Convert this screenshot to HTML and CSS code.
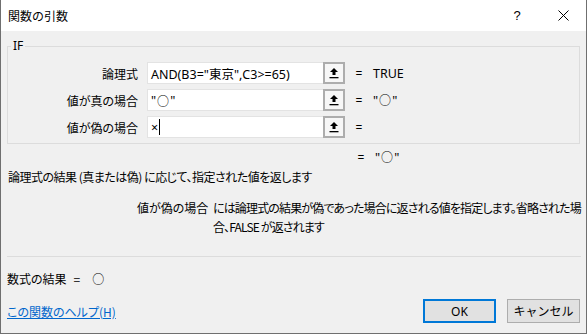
FILE: index.html
```html
<!DOCTYPE html>
<html lang="ja">
<head>
<meta charset="utf-8">
<title>関数の引数</title>
<link rel="stylesheet" href="styles.css">
</head>
<body>
<div class="window">
  <div class="titlebar">
    <span class="title">関数の引数</span>
    <div class="controls">
      <span class="ctl help">?</span>
      <span class="ctl close">
        <svg width="11" height="11" viewBox="0 0 11 11"><path d="M0.5 0.5 L10.5 10.5 M10.5 0.5 L0.5 10.5" stroke="#000" stroke-width="1" fill="none"/></svg>
      </span>
    </div>
  </div>
  <div class="content">
    <fieldset class="group">
      <legend class="legend">IF</legend>
      <div class="args">
        <div class="arg">
          <span class="arg-label">論理式</span>
          <span class="arg-input">AND(B3="東京",C3&gt;=65)</span>
          <span class="ref-btn"><svg width="10" height="12" viewBox="0 0 10 12"><path d="M5 1 L9 5 L6.5 5 L6.5 8 L3.5 8 L3.5 5 L1 5 Z" fill="#000"/><rect x="0.5" y="10" width="9" height="1.3" fill="#000"/></svg></span>
          <span class="arg-eq">=</span>
          <span class="arg-val">TRUE</span>
        </div>
        <div class="arg">
          <span class="arg-label">値が真の場合</span>
          <span class="arg-input">"<span class="circ">○</span>"</span>
          <span class="ref-btn"><svg width="10" height="12" viewBox="0 0 10 12"><path d="M5 1 L9 5 L6.5 5 L6.5 8 L3.5 8 L3.5 5 L1 5 Z" fill="#000"/><rect x="0.5" y="10" width="9" height="1.3" fill="#000"/></svg></span>
          <span class="arg-eq">=</span>
          <span class="arg-val">"<span class="circ">○</span>"</span>
        </div>
        <div class="arg">
          <span class="arg-label">値が偽の場合</span>
          <span class="arg-input">×<span class="caret"></span></span>
          <span class="ref-btn"><svg width="10" height="12" viewBox="0 0 10 12"><path d="M5 1 L9 5 L6.5 5 L6.5 8 L3.5 8 L3.5 5 L1 5 Z" fill="#000"/><rect x="0.5" y="10" width="9" height="1.3" fill="#000"/></svg></span>
          <span class="arg-eq">=</span>
          <span class="arg-val"></span>
        </div>
      </div>
    </fieldset>
    <div class="total">
      <span class="arg-eq">=</span>
      <span class="arg-val">"<span class="circ">○</span>"</span>
    </div>
    <p class="desc">論理式の結果 (真または偽) に応じて、指定された値を返します</p>
    <div class="argdesc">
      <span class="argdesc-name">値が偽の場合</span>
      <span class="argdesc-text">には論理式の結果が偽であった場合に返される値を指定します。省略された場合、FALSE が返されます</span>
    </div>
    <div class="sep"></div>
    <div class="result"><span>数式の結果</span><span class="res-eq">=</span><span class="circ res-val">○</span></div>
    <div class="footer">
      <a class="help-link" href="#">この関数のヘルプ(H)</a>
      <div class="buttons">
        <button class="btn btn-ok">OK</button>
        <button class="btn">キャンセル</button>
      </div>
    </div>
  </div>
</div>
</body>
</html>
```
FILE: styles.css
```css
html, body {
  margin: 0;
  padding: 0;
  background: #f0f0f0;
}
.window {
  width: 587px;
  height: 334px;
  box-sizing: border-box;
  border: 1px solid #6f6f6f;
  border-top: none;
  background: #f0f0f0;
  display: flex;
  flex-direction: column;
  font-family: "Noto Sans", "Noto Sans CJK JP", sans-serif;
  font-size: 12px;
  color: #000;
  overflow: hidden;
}
.title, .arg-label, .desc, .argdesc, .result, .help-link {
  font-family: "Noto Sans CJK JP", sans-serif;
  font-feature-settings: "palt" 1;
}
.titlebar {
  height: 31px;
  flex: none;
  background: #fff;
  display: flex;
  align-items: center;
  justify-content: space-between;
  padding-left: 7px;
}
.title {
  font-size: 12px;
  line-height: 16px;
  font-feature-settings: normal;
}
.controls {
  display: flex;
  height: 100%;
}
.ctl {
  width: 46px;
  height: 100%;
  display: flex;
  align-items: center;
  justify-content: center;
}
.help {
  font-size: 13px;
  font-family: "Liberation Sans", sans-serif;
}
.content {
  flex: 1;
  display: flex;
  flex-direction: column;
  padding: 0 6px 10px 6px;
}
.group {
  margin: 8px 0 0 0;
  padding: 9px 0 5px 0;
  border: 1px solid #dcdcdc;
  min-width: 0;
}
.legend {
  margin-left: 3px;
  padding: 0 2px 0 2px;
  line-height: 14px;
  font-size: 12px;
}
.args {
  display: flex;
  flex-direction: column;
  gap: 5px;
}
.arg {
  display: flex;
  align-items: center;
  height: 22px;
}
.arg-label {
  width: 130px;
  text-align: right;
  flex: none;
}
.arg-input {
  margin-left: 9px;
  width: 176px;
  height: 22px;
  box-sizing: border-box;
  background: #fff;
  border: 1px solid #e3e3e3;
  border-right: none;
  padding-left: 3px;
  display: flex;
  align-items: center;
  white-space: nowrap;
  overflow: hidden;
  flex: none;
  font-size: 12.5px;
}
.circ {
  font-family: "Noto Sans CJK JP", sans-serif;
  font-size: 12px;
  margin: 0 1px;
}
.caret {
  display: inline-block;
  width: 1px;
  height: 16px;
  background: #000;
  margin-left: 1px;
}
.ref-btn {
  width: 22px;
  height: 22px;
  box-sizing: border-box;
  border: 2px solid #adadad;
  background: #f7f7f7;
  display: flex;
  align-items: center;
  justify-content: center;
  flex: none;
}
.arg-eq {
  margin-left: 10px;
  width: 8px;
  text-align: center;
}
.arg-val {
  margin-left: 10px;
  font-size: 12.5px;
}
.total {
  display: flex;
  align-items: center;
  height: 16px;
  margin-top: 5px;
  padding-left: 340px;
}
.desc {
  margin: 4px 0 0 1px;
  line-height: 16px;
  letter-spacing: -0.5px;
}
.argdesc {
  display: flex;
  margin-top: 13px;
  padding-left: 130px;
  line-height: 19px;
}
.argdesc-name {
  flex: none;
  width: 76px;
}
.argdesc-text {
  flex: 1;
  letter-spacing: -0.85px;
  margin-right: -3px;
}
.sep {
  margin-top: auto;
  height: 1px;
  background: #dcdcdc;
  margin-right: -1px;
}
.result {
  margin-top: 14px;
  line-height: 16px;
  display: flex;
  align-items: center;
}
.res-eq {
  margin-left: 7px;
}
.res-val {
  margin-left: 12px;
}
.footer {
  display: flex;
  justify-content: space-between;
  align-items: flex-end;
  margin-top: 12px;
}
.help-link {
  color: #0066cc;
  text-decoration: underline;
  line-height: 16px;
  margin-bottom: 3px;
}
.buttons {
  display: flex;
  gap: 11px;
}
.btn {
  width: 73px;
  height: 24px;
  box-sizing: border-box;
  background: #e1e1e1;
  border: 1px solid #adadad;
  font-family: "Noto Sans", "Noto Sans CJK JP", sans-serif;
  font-size: 12px;
  color: #000;
  padding: 0;
  margin: 0;
}
.btn-ok {
  border: 2px solid #0078d7;
}
```
